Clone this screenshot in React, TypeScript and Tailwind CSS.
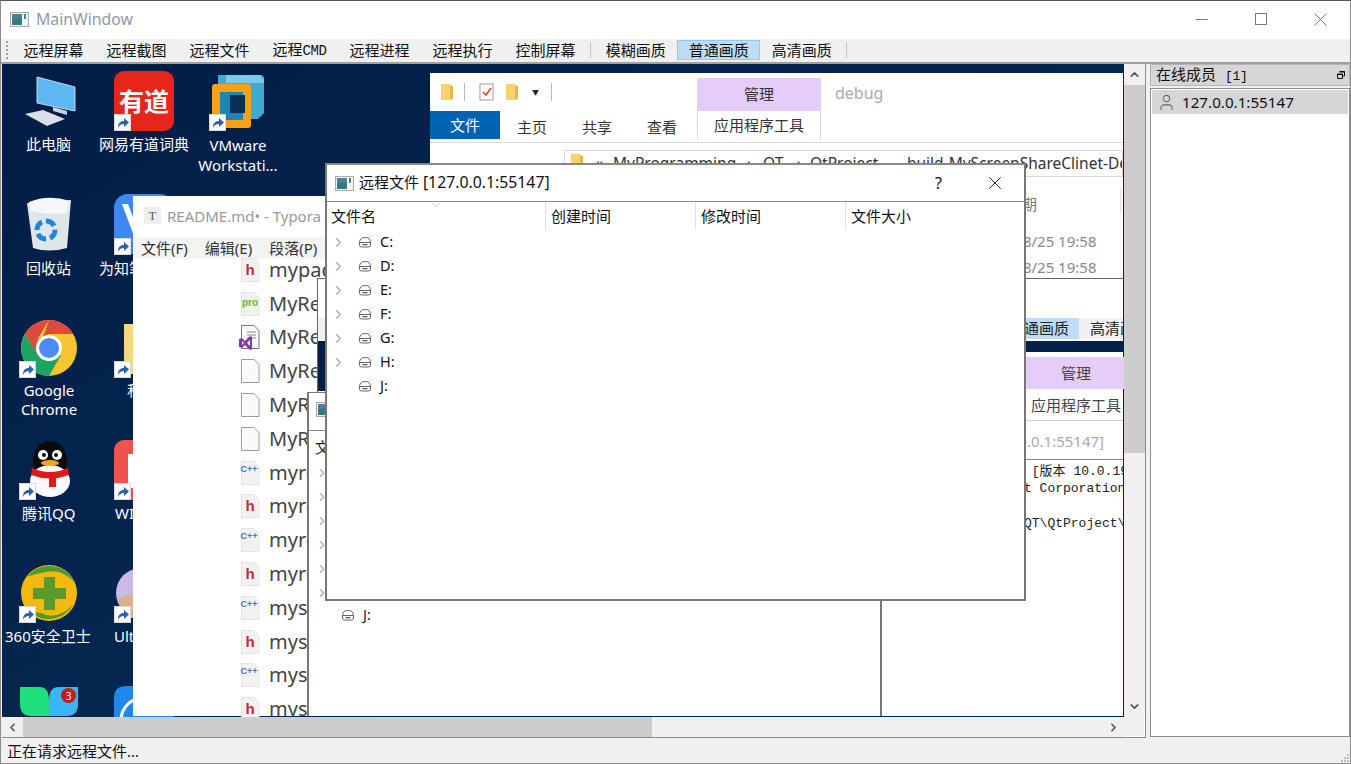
import { ChevronLeft, ChevronRight, ChevronUp, ChevronDown, X, User } from 'lucide-react'

const AppIcon = ({ className = '' }: { className?: string }) => (
  <svg viewBox="0 0 19 15" className={className}>
    <rect x="0.5" y="0.5" width="18" height="14" fill="#f4f4f4" stroke="#a9a9a9" />
    <rect x="2" y="2" width="10" height="11" fill="#2f7f78" />
    <rect x="2" y="2" width="10" height="5" fill="#4d7f9b" />
    <rect x="14" y="2" width="2" height="5" fill="#3f8f7f" />
  </svg>
)

const Shortcut = ({ className }: { className: string }) => (
  <span className={`absolute flex h-[17px] w-[17px] items-center justify-center border border-[#d8d8d8] bg-white ${className}`}>
    <svg viewBox="0 0 15 15" className="h-[15px] w-[15px]">
      <path d="M3 13 C3 8 5 6 9 6 L9 3 L14 7.5 L9 12 L9 9 C6 9 4.500 10 3 13Z" fill="#2a62b0" />
    </svg>
  </span>
)

const Folder = ({ className }: { className: string }) => (
  <svg viewBox="0 0 14 18" className={className}>
    <path d="M1 1 L10 1 L10 17 L1 17Z" fill="#f6d36f" />
    <path d="M10 2 L13 3 L13 16 L10 17Z" fill="#e8b93f" />
  </svg>
)

const DriveIcon = () => (
  <svg viewBox="0 0 14 12" className="h-[12px] w-[14px] shrink-0">
    <path d="M1.500 7 Q1.500 1.500 6.500 1.500 H7.500 Q12.500 1.500 12.500 7 V9 Q12.500 11 10.500 11 H3.500 Q1.500 11 1.500 9Z M1.500 6.500 H12.500" fill="none" stroke="#666" />
    <path d="M4.500 8.700 H9.500" stroke="#333" />
  </svg>
)

const drives = ['C:', 'D:', 'E:', 'F:', 'G:', 'H:', 'J:']

const FileGlyph = ({ kind }: { kind: string }) => (
  <svg viewBox="0 0 22 26" className="h-[26px] w-[22px]">
    <path d="M2.500 1.500 H15 L20 6.500 V24.500 H2.500Z" fill={kind === 'blank' || kind === 'vs' ? '#fafafa' : '#f1f1f1'} stroke={kind === 'blank' ? '#9c9c9c' : kind === 'vs' ? '#777' : '#e3e3e3'} />
    {kind === 'h' && <text x="11" y="18" textAnchor="middle" fontSize="15" fontWeight="700" fill="#c5283d" fontFamily="Liberation Sans">h</text>}
    {kind === 'pro' && <text x="11" y="15" textAnchor="middle" fontSize="10" fontWeight="700" fill="#6cb52d" fontFamily="Liberation Sans">pro</text>}
    {kind === 'c' && <text x="10" y="12" textAnchor="middle" fontSize="9" fontWeight="700" fill="#4a78b0" fontFamily="Liberation Sans">C++</text>}
    {kind === 'vs' && (
      <>
        <path d="M8 8 H17 M8 11 H17 M8 14 H17" stroke="#888" />
        <path d="M0 15 L3 14 L6 17 L11 12 L13 13 V25 L11 26 L6 21 L3 24 L0 23Z M3 17 V21 L5 19Z M11 16 L8 19 L11 22Z" fill="#7a3da0" fillRule="evenodd" />
      </>
    )}
  </svg>
)

const typoraFiles = [
  { name: 'mypag', kind: 'h' },
  { name: 'MyRe', kind: 'pro' },
  { name: 'MyRe', kind: 'vs' },
  { name: 'MyRe', kind: 'blank' },
  { name: 'MyR', kind: 'blank' },
  { name: 'MyR', kind: 'blank' },
  { name: 'myre', kind: 'c' },
  { name: 'myre', kind: 'h' },
  { name: 'myre', kind: 'c' },
  { name: 'myre', kind: 'h' },
  { name: 'myse', kind: 'c' },
  { name: 'myse', kind: 'h' },
  { name: 'myse', kind: 'c' },
  { name: 'myse', kind: 'h' },
]

const toolbarA = ['远程屏幕', '远程截图', '远程文件', '远程CMD', '远程进程', '远程执行', '控制屏幕']

function Toolbar() {
  return (
    <div className="flex h-[23px] items-center bg-[#f0f0f0] pl-[12px] pb-[2px] text-[15px] text-[#111]">
      <span className="mr-[3px] ml-[-7px] h-[18px] w-[3px] border-l-2 border-dotted border-[#a0a0a0]" />
      {toolbarA.map((t) => (
        <span key={t} className="px-[11.500px] leading-[22px]">
          {t === '远程CMD' ? (
            <>
              远程<span className="font-['Liberation_Mono'] text-[14px] tracking-[-0.400px]">CMD</span>
            </>
          ) : (
            t
          )}
        </span>
      ))}
      <span className="mx-[3px] h-[16px] w-px bg-[#c8c8c8]" />
      <span className="px-[11.500px] leading-[22px]">模糊画质</span>
      <span className="border border-[#90c8f6] bg-[#bedcf5] px-[10.500px] leading-[18px]">普通画质</span>
      <span className="px-[11.500px] leading-[22px]">高清画质</span>
      <span className="ml-[3px] h-[16px] w-px bg-[#c8c8c8]" />
    </div>
  )
}

function DesktopIcons() {
  return (
    <>
      {/* row 1 */}
      <svg viewBox="0 0 54 52" className="absolute left-[21px] top-[11px] h-[52px] w-[54px]">
        <path d="M14 2 L52 12 V36 L14 28Z" fill="#5db7f2" stroke="#c7d6e2" />
        <path d="M30 32 L44 36 L44 40 L30 36Z" fill="#c9d3dc" />
        <path d="M2 39 L20 35 L42 44 L24 51Z" fill="#d9dfe5" />
      </svg>
      <span className="absolute left-[112px] top-[7px] flex h-[60px] w-[60px] items-center justify-center rounded-[10px] bg-[#e6261b] text-[25px] leading-none font-bold text-white">有道</span>
      <Shortcut className="left-[112px] top-[50px]" />
      <svg viewBox="0 0 56 56" className="absolute left-[208px] top-[9px] h-[56px] w-[56px]">
        <path d="M8 2 H50 Q54 2 54 6 V40 L48 46 H20 V14 H8Z" fill="#3fa9d4" />
        <path d="M16 2 H50 L54 6 V10 H16Z" fill="#7ccbe6" />
        <path d="M2 14 Q2 11 5 11 H38 Q41 11 41 14 V52 Q41 55 38 55 H5 Q2 55 2 52Z" fill="#f5a016" />
        <rect x="10" y="19" width="23" height="28" fill="#1f85b3" />
        <rect x="20" y="22" width="15" height="18" fill="#0a2f55" />
      </svg>
      <Shortcut className="left-[207px] top-[50px]" />
      {/* row 2 */}
      <svg viewBox="0 0 46 54" className="absolute left-[24px] top-[133px] h-[54px] w-[46px]">
        <path d="M1 6 L45 3 L41 51 Q23 56 7 51Z" fill="#dfe6ea" />
        <path d="M3 5 Q22 -3 44 4 L40 16 Q20 18 5 14Z" fill="#f5f7f8" />
        <circle cx="20" cy="33" r="9" fill="none" stroke="#1b87d6" strokeWidth="5" strokeDasharray="10 4" />
      </svg>
      <svg viewBox="0 0 60 60" className="absolute left-[112px] top-[130px] h-[60px] w-[60px]">
        <rect width="60" height="60" rx="14" fill="#3f87f0" />
        <path d="M8 10 L20 42 H26 L14 10Z" fill="#fff" />
      </svg>
      <Shortcut className="left-[112px] top-[174px]" />
      {/* row 3 */}
      <svg viewBox="0 0 56 56" className="absolute left-[19px] top-[256px] h-[56px] w-[56px]">
        <circle cx="28" cy="28" r="28" fill="#f7c531" />
        <path d="M28 0 A28 28 0 0 0 4 14 L16 34 Z M28 0 A28 28 0 0 1 52 14 H28 L16 20Z" fill="#dd4b3e" />
        <path d="M4 14 A28 28 0 0 0 28 56 L40 35 L16 34Z" fill="#1ea362" />
        <circle cx="28" cy="28" r="13" fill="#fff" />
        <circle cx="28" cy="28" r="10" fill="#4b8bf4" />
      </svg>
      <Shortcut className="left-[17px] top-[297px]" />
      <span className="absolute left-[122px] top-[260px] h-[50px] w-[20px] bg-[#f6d87e]" />
      <Shortcut className="left-[112px] top-[297px]" />
      {/* row 4 */}
      <svg viewBox="0 0 50 56" className="absolute left-[23px] top-[377px] h-[56px] w-[50px]">
        <ellipse cx="25" cy="20" rx="17" ry="20" fill="#0b0b0b" />
        <ellipse cx="25" cy="40" rx="20" ry="16" fill="#fafafa" />
        <circle cx="18" cy="14" r="5" fill="#fff" />
        <circle cx="32" cy="14" r="5" fill="#fff" />
        <circle cx="19" cy="14" r="2" fill="#111" />
        <circle cx="31" cy="14" r="2" fill="#111" />
        <ellipse cx="25" cy="22" rx="9" ry="3" fill="#f3a51e" />
        <path d="M7 27 Q25 35 43 27 L44 34 Q25 41 6 34Z" fill="#e11919" />
        <rect x="24" y="34" width="7" height="12" fill="#e11919" />
      </svg>
      <Shortcut className="left-[17px] top-[419px]" />
      <svg viewBox="0 0 60 60" className="absolute left-[112px] top-[376px] h-[60px] w-[60px]">
        <rect width="60" height="60" rx="10" fill="#ef5350" />
        <rect x="14" y="14" width="6" height="34" fill="#fff" />
      </svg>
      <Shortcut className="left-[112px] top-[419px]" />
      {/* row 5 */}
      <svg viewBox="0 0 56 60" className="absolute left-[19px] top-[499px] h-[60px] w-[56px]">
        <circle cx="28" cy="30" r="28" fill="#f4b90c" />
        <path d="M6 14 A28 28 0 0 1 54 20 Q40 4 20 10 Q10 12 6 14Z" fill="#4f9a2e" />
        <path d="M8 48 A28 28 0 0 0 52 42 Q36 58 20 50Z" fill="#4f9a2e" />
        <path d="M23 14 H34 V25 H45 V36 H34 V47 H23 V36 H12 V25 H23Z" fill="#5a9a2c" />
      </svg>
      <Shortcut className="left-[17px] top-[542px]" />
      <svg viewBox="0 0 50 50" className="absolute left-[114px] top-[504px] h-[50px] w-[50px]">
        <circle cx="25" cy="25" r="25" fill="#c9bbe6" />
        <path d="M1 32 Q14 22 30 30 L30 50 H10Z" fill="#d8b48c" />
      </svg>
      <Shortcut className="left-[112px] top-[542px]" />
      {/* row 6 */}
      <svg viewBox="0 0 60 32" className="absolute left-[17px] top-[622px] h-[32px] w-[60px]">
        <path d="M1 1 H20 Q30 1 30 14 V30 H12 Q1 30 1 18Z" fill="#1ee07c" />
        <path d="M59 1 H40 Q30 1 30 14 V30 H48 Q59 30 59 18Z" fill="#3ab5f5" />
      </svg>
      <span className="absolute left-[59px] top-[624px] flex h-[15px] w-[15px] items-center justify-center rounded-full bg-[#c41a1a] text-[10px] leading-none text-white">3</span>
      <svg viewBox="0 0 60 40" className="absolute left-[112px] top-[622px] h-[40px] w-[60px]">
        <path d="M0 40 V12 Q0 0 12 0 H48 Q60 0 60 12 V40Z" fill="#1e88ef" />
        <path d="M8 40 A22 22 0 0 1 30 12" fill="none" stroke="#fff" strokeWidth="3" />
      </svg>

      {/* labels */}
      <span className="absolute left-[24px] top-[70px] text-[15px] leading-[20px] text-white">此电脑</span>
      <span className="absolute left-[97px] top-[70px] text-[15px] leading-[20px] text-white">网易有道词典</span>
      <span className="absolute left-[186px] top-[71px] w-[100px] text-center text-[15px] leading-[20px] text-white">VMware<br />Workstati...</span>
      <span className="absolute left-[24px] top-[194px] text-[15px] leading-[20px] text-white">回收站</span>
      <span className="absolute left-[97px] top-[194px] text-[15px] leading-[20px] text-white">为知笔记</span>
      <span className="absolute left-[-3px] top-[317px] w-[100px] text-center text-[15px] leading-[19px] text-white">Google<br />Chrome</span>
      <span className="absolute left-[125px] top-[317px] text-[15px] leading-[19px] text-white">私</span>
      <span className="absolute left-[20px] top-[439px] text-[15px] leading-[20px] text-white">腾讯QQ</span>
      <span className="absolute left-[113px] top-[439px] text-[15px] leading-[20px] text-white">WI</span>
      <span className="absolute left-[3px] top-[562px] text-[15px] leading-[20px] text-white">360安全卫士</span>
      <span className="absolute left-[112px] top-[562px] text-[15px] leading-[20px] text-white">Ult</span>
    </>
  )
}

function Explorer() {
  return (
    <div className="absolute left-[428px] top-[9px] h-[643px] w-[693px] bg-white text-[15px] text-[#333]">
      <Folder className="absolute left-[10px] top-[10px] h-[18px] w-[14px]" />
      <span className="absolute left-[34px] top-[10px] h-[18px] w-px bg-[#bbb]" />
      <svg viewBox="0 0 16 18" className="absolute left-[49px] top-[10px] h-[18px] w-[16px]">
        <rect x="1" y="1" width="13" height="16" fill="#fff" stroke="#999" />
        <path d="M4 9 L7 12 L12 5" fill="none" stroke="#d2412a" strokeWidth="1.500" />
      </svg>
      <Folder className="absolute left-[75px] top-[10px] h-[18px] w-[14px]" />
      <span className="absolute left-[102px] top-[16px] text-[7px] leading-none text-[#222]">▼</span>
      <span className="absolute left-[121px] top-[10px] h-[18px] w-px bg-[#bbb]" />
      <span className="absolute left-[267px] top-[5px] flex h-[33px] w-[124px] items-center justify-center bg-[#e6ccf9]">管理</span>
      <span className="absolute left-[405px] top-[9px] text-[16px] leading-[22px] text-[#aaa]">debug</span>
      <span className="absolute left-0 top-[38px] flex h-[28px] w-[70px] items-center justify-center bg-[#0063b1] text-white">文件</span>
      <span className="absolute left-[87px] top-[42px] leading-[24px]">主页</span>
      <span className="absolute left-[152px] top-[42px] leading-[24px]">共享</span>
      <span className="absolute left-[217px] top-[42px] leading-[24px]">查看</span>
      <span className="absolute left-[267px] top-[38px] flex h-[29px] w-[124px] items-center justify-center border-x border-[#d8d8d8]">应用程序工具</span>
      <span className="absolute left-0 top-[69px] h-px w-full bg-[#dadada]" />
      <div className="absolute left-[134px] top-[77px] flex h-[27px] w-[559px] items-center overflow-hidden border border-[#d9d9d9] whitespace-nowrap text-[15.500px]">
        <span className="ml-[30px] w-[18px] shrink-0">«</span>
        <span className="w-[134px] shrink-0">MyProgramming</span>
        <span className="w-[16px] shrink-0">›</span>
        <span className="w-[34px] shrink-0">QT</span>
        <span className="w-[13px] shrink-0">›</span>
        <span className="w-[97px] shrink-0">QtProject</span>
        <span className="shrink-0">build-MyScreenShareClinet-Debug</span>
      </div>
      <Folder className="absolute left-[140px] top-[80px] h-[18px] w-[14px]" />
      <span className="absolute left-[547px] top-[120px] text-[#777]">修改日期</span>
      <span className="absolute left-[690px] top-[116px] h-[25px] w-px bg-[#e2e2e2]" />
      <span className="absolute left-[553px] top-[157px] whitespace-nowrap text-[#888]">2020/8/25 19:58</span>
      <span className="absolute left-[553px] top-[183px] whitespace-nowrap text-[#888]">2020/8/25 19:58</span>
    </div>
  )
}

function Typora() {
  return (
    <div className="absolute left-[131px] top-[132px] h-[520px] w-[400px] bg-white text-[#555]">
      <span className="absolute left-[11px] top-[11px] flex h-[17px] w-[17px] items-center justify-center bg-[#eee] font-['Liberation_Serif'] text-[12px] text-[#555]">T</span>
      <span className="absolute left-[34px] top-[9px] whitespace-nowrap text-[15px] leading-[22px] text-[#999]">README.md• - Typora</span>
      <div className="absolute left-0 top-[41px] flex h-[22px] w-full items-center gap-[17px] bg-[#f3f4f4] pl-[8px] text-[15px] text-[#333]">
        <span>文件(F)</span>
        <span>编辑(E)</span>
        <span>段落(P)</span>
      </div>
      <div className="absolute left-[106px] top-[57px] flex flex-col">
        {typoraFiles.map((f, i) => (
          <div key={i} className="flex h-[33.800px] items-center gap-[8px]">
            <FileGlyph kind={f.kind} />
            <span className="text-[20px] leading-none text-[#444]">{f.name}</span>
          </div>
        ))}
      </div>
    </div>
  )
}

function NestedWindows() {
  return (
    <>
      {/* nested main window */}
      <div className="absolute left-[315px] top-[214px] h-[438px] w-[806px] border-t border-l border-[#666] bg-white">
        <div className="absolute left-0 top-[39px] flex h-[21px] w-full items-center bg-[#f0f0f0] pl-[701px] text-[15px] text-[#222]">
          <span className="mr-[11px] bg-[#bedcf5] pl-[5px] pr-[10px] leading-[21px] whitespace-nowrap">通画质</span>
          <span className="whitespace-nowrap">高清画质</span>
        </div>
        <div className="absolute left-0 top-[62px] h-[50px] w-full bg-[#052048]" />
      </div>
      {/* nested explorer */}
      <div className="absolute left-[560px] top-[288px] h-[364px] w-[561px] bg-white text-[15px] text-[#444]">
        <span className="absolute left-[452px] top-[5px] flex h-[32px] w-[124px] items-center justify-center bg-[#e6ccf9]">管理</span>
        <span className="absolute left-[469px] top-[42px] whitespace-nowrap leading-[22px]">应用程序工具</span>
        <span className="absolute left-0 top-[68px] h-px w-full bg-[#ccc]" />
      </div>
      {/* nested cmd */}
      <div className="absolute left-[880px] top-[358px] h-[294px] w-[241px] bg-white text-[15px]">
        <span className="absolute right-[19px] top-[8px] whitespace-nowrap text-[#aaa]">127.0.0.1:55147]</span>
        <span className="absolute left-0 top-[37px] h-px w-full bg-[#888]" />
        <pre className="absolute left-[142px] top-[41px] font-['Liberation_Mono','Noto_Sans_CJK_SC',monospace] text-[13px] leading-[17.300px] text-[#222]">{` [版本 10.0.19041
t Corporation

QT\\QtProject\\`}</pre>
      </div>
      {/* second file dialog */}
      <div className="absolute left-[305px] top-[328px] h-[324px] w-[575px] border-x-2 border-t border-[#777] bg-white text-[#222]">
        <AppIcon className="absolute left-[7px] top-[9px] h-[15px] w-[19px]" />
        <span className="absolute left-0 top-[37px] h-px w-full bg-[#888]" />
        <span className="absolute left-[6px] top-[43px] text-[15px]">文件名</span>
        <div className="absolute left-[6px] top-[68px] flex flex-col">
          {[0, 1, 2, 3, 4, 5].map((i) => (
            <ChevronRight key={i} size={14} strokeWidth={2} className="my-[5px] text-[#aaa]" />
          ))}
        </div>
        <div className="absolute left-[32px] top-[211px] flex items-center gap-[8px] text-[14.500px]">
          <DriveIcon />
          <span>J:</span>
        </div>
      </div>
    </>
  )
}

function FileDialog() {
  return (
    <div className="absolute left-[323px] top-[99px] flex h-[438px] w-[701px] flex-col border-2 border-[#777] border-t-[#888] bg-white text-[#111]">
      <div className="flex h-[36px] shrink-0 items-center pl-[8px]">
        <AppIcon className="h-[15px] w-[19px]" />
        <span className="ml-[5px] text-[15px] whitespace-nowrap">远程文件 <span className="text-[15.800px]">[127.0.0.1:55147]</span></span>
        <span className="ml-auto mr-[42px] text-[16px]">?</span>
        <X size={22} strokeWidth={1} className="mr-[18px]" />
      </div>
      <div className="flex h-[29px] shrink-0 border-t border-[#8a8a8a] text-[15px]">
        <span className="relative w-[219px] border-r border-[#e0e0e0] pl-[4px] leading-[28px]">
          文件名
          <ChevronDown size={12} strokeWidth={1} className="absolute left-[103px] top-[-3px] text-[#777]" />
        </span>
        <span className="w-[150px] border-r border-[#e0e0e0] pl-[5px] leading-[28px]">创建时间</span>
        <span className="w-[150px] border-r border-[#e0e0e0] pl-[5px] leading-[28px]">修改时间</span>
        <span className="pl-[5px] leading-[28px]">文件大小</span>
      </div>
      <div className="flex flex-col">
        {drives.map((d) => (
          <div key={d} className="flex h-[24px] items-center pl-[4px] text-[14.500px]">
            <span className="flex w-[14px] justify-center">
              {d !== 'J:' && <ChevronRight size={15} strokeWidth={2} className="shrink-0 text-[#aaa]" />}
            </span>
            <span className="ml-[13px]"><DriveIcon /></span>
            <span className="ml-[8px]">{d}</span>
          </div>
        ))}
      </div>
    </div>
  )
}

export default function App() {
  return (
    <div className="flex h-[764px] w-[1351px] flex-col overflow-hidden border-x border-b border-t border-[#8c8c8c] border-t-[#555] bg-[#f0f0f0] font-['Noto_Sans','Noto_Sans_CJK_SC',sans-serif]">
      {/* title bar */}
      <div className="flex h-[38px] shrink-0 items-center bg-white pb-[1px] pl-[9px]">
        <AppIcon className="h-[15px] w-[19px]" />
        <span className="ml-[7px] text-[15.800px] text-[#8f99a6]">MainWindow</span>
        <div className="ml-auto mr-[23px] flex items-center gap-[46px]">
          <svg viewBox="0 0 13 13" className="h-[13px] w-[13px]"><path d="M0 6.500 H12" stroke="#777" /></svg>
          <svg viewBox="0 0 13 13" className="h-[13px] w-[13px]"><rect x=".5" y=".5" width="11" height="11" fill="none" stroke="#777" /></svg>
          <svg viewBox="0 0 13 13" className="h-[13px] w-[13px]"><path d="M.5 .5 L12.500 12.500 M12.500 .5 L.5 12.500" stroke="#777" /></svg>
        </div>
      </div>
      <Toolbar />

      {/* central area */}
      <div className="flex min-h-0 flex-1 border-t-2 border-[#a0a0a0]">
        <div className="ml-px flex w-[1144px] shrink-0 flex-col border-r border-b border-[#8c8c8c]">
          <div className="flex min-h-0 flex-1">
            <div className="relative flex-1 overflow-hidden bg-gradient-to-br from-[#021d46] via-[#05264f] to-[#02204a]">
              <DesktopIcons />
              <Explorer />
              <Typora />
              <NestedWindows />
              <FileDialog />
            </div>
            {/* vertical scrollbar */}
            <div className="flex w-[21px] shrink-0 flex-col bg-[#f0f0f0]">
              <div className="flex h-[21px] items-center justify-center">
                <ChevronUp size={13} strokeWidth={3} className="text-[#555]" />
              </div>
              <div className="h-[368px] bg-[#cdcdcd]" />
              <div className="mt-auto flex h-[21px] items-center justify-center">
                <ChevronDown size={13} strokeWidth={3} className="text-[#555]" />
              </div>
            </div>
          </div>
          {/* horizontal scrollbar */}
          <div className="flex h-[20px] shrink-0 items-center bg-[#f0f0f0]">
            <div className="flex h-full w-[21px] items-center justify-center">
              <ChevronLeft size={13} strokeWidth={3} className="text-[#555]" />
            </div>
            <div className="h-full w-[629px] bg-[#cdcdcd]" />
            <div className="ml-auto flex h-full w-[21px] items-center justify-center">
              <ChevronRight size={13} strokeWidth={3} className="text-[#555]" />
            </div>
            <div className="h-full w-[21px] border-r border-b border-white" />
          </div>
        </div>

        {/* members dock */}
        <div className="ml-[4px] flex min-w-0 flex-1 flex-col">
          <div className="flex h-[22px] shrink-0 items-center justify-between border border-[#b5b5b5] bg-[#d6d6d6] pr-[4px] pl-[5px] text-[15px] text-[#111]">
            <span>在线成员<span className="ml-[9px] font-['Liberation_Mono'] text-[13px] tracking-[-0.300px]">[1]</span></span>
            <svg viewBox="0 0 8 8" className="h-[8px] w-[8px]">
              <path d="M2.500 .5 H7.500 V5 H5.500 M.5 3 H5.500 V7.500 H.5Z M.5 3.500 H5.500 M2.500 1 H7.500" fill="none" stroke="#111" />
            </svg>
          </div>
          <div className="mt-[2px] mb-[1px] flex-1 border border-[#8c8c8c] bg-white p-[1px]">
            <div className="flex h-[24px] items-center bg-[#d6d6d6] pl-[5px] text-[15.200px] text-[#111]">
              <User size={19} strokeWidth={1.300} className="text-[#5d6b7a]" />
              <span className="ml-[6px]">127.0.0.1:55147</span>
            </div>
          </div>
        </div>
      </div>

      {/* status bar */}
      <div className="relative flex h-[25px] shrink-0 items-center pt-[1px] pl-[6px] text-[15px] text-[#111]">
        正在请求远程文件...
        <span className="absolute right-[1px] bottom-[1px] grid grid-cols-3 gap-px">
          <i className="h-[2px] w-[2px]" />
          <i className="h-[2px] w-[2px]" />
          <i className="h-[2px] w-[2px] bg-[#bbb]" />
          <i className="h-[2px] w-[2px]" />
          <i className="h-[2px] w-[2px] bg-[#bbb]" />
          <i className="h-[2px] w-[2px] bg-[#bbb]" />
          <i className="h-[2px] w-[2px] bg-[#bbb]" />
          <i className="h-[2px] w-[2px] bg-[#bbb]" />
          <i className="h-[2px] w-[2px] bg-[#bbb]" />
        </span>
      </div>
    </div>
  )
}
